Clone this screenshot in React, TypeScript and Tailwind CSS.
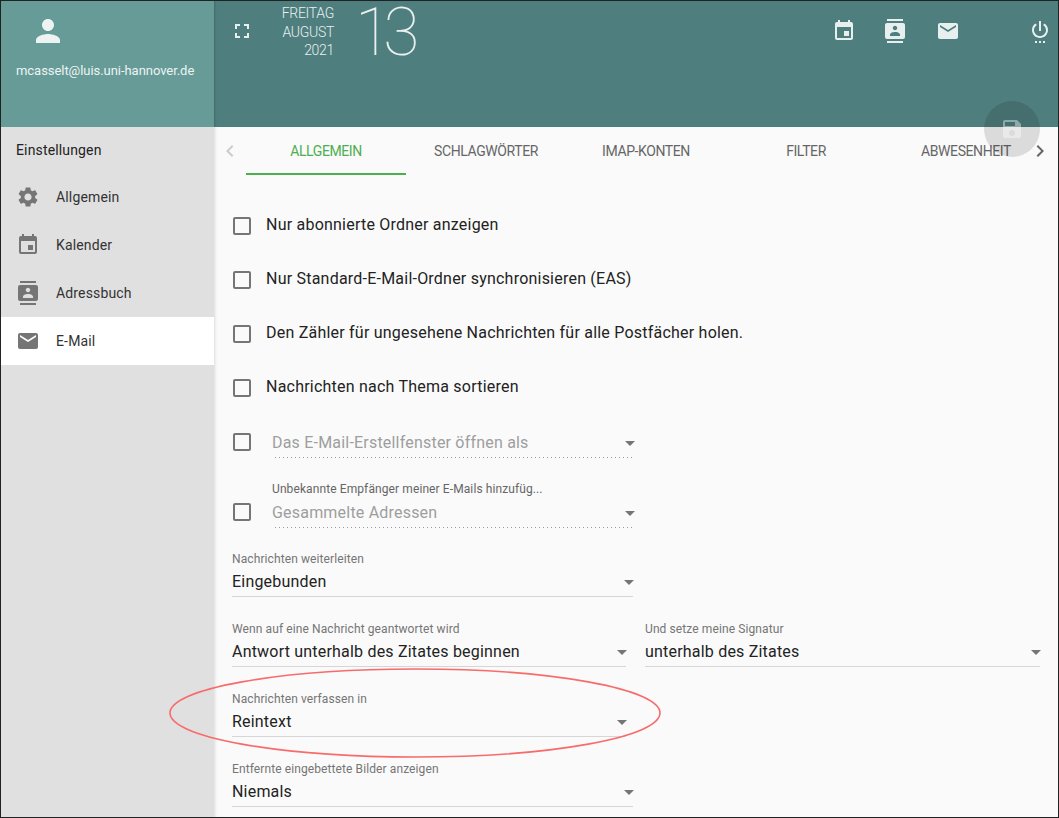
import React from 'react';
import {
  MdPerson,
  MdFullscreen,
  MdEvent,
  MdContacts,
  MdEmail,
  MdSettingsPower,
  MdSettings,
  MdSave,
  MdChevronLeft,
  MdChevronRight,
  MdCheckBoxOutlineBlank,
  MdArrowDropDown,
} from 'react-icons/md';

const navItems = [
  { label: 'Allgemein', icon: MdSettings },
  { label: 'Kalender', icon: MdEvent },
  { label: 'Adressbuch', icon: MdContacts },
  { label: 'E-Mail', icon: MdEmail, active: true },
];

const tabs = ['Allgemein', 'Schlagwörter', 'IMAP-Konten', 'Filter', 'Abwesenheit'];

const checks = [
  'Nur abonnierte Ordner anzeigen',
  'Nur Standard-E-Mail-Ordner synchronisieren (EAS)',
  'Den Zähler für ungesehene Nachrichten für alle Postfächer holen.',
  'Nachrichten nach Thema sortieren',
];

interface SelectProps {
  label?: string;
  value: string;
  disabled?: boolean;
  className?: string;
}

const Select: React.FC<SelectProps> = ({ label, value, disabled, className }) => (
  <div className={`relative h-[70px] ${className ?? ''}`}>
    {label && (
      <div className={`absolute top-[1px] left-0 text-[12px] leading-[14px] tracking-[0.1px] whitespace-nowrap ${disabled ? 'text-[#666]' : 'text-[#757575]'}`}>
        {label}
      </div>
    )}
    <div
      className={`absolute top-[16px] left-0 right-0 flex items-center justify-between ${
        disabled
          ? 'h-[31px] text-[#9e9e9e] bg-[linear-gradient(to_right,#999_0%,#999_33%,transparent_0%)] bg-[length:4px_1px] bg-bottom bg-repeat-x'
          : 'h-[30px] border-b border-[#d6d6d6] text-[#222]'
      }`}
    >
      <span className={`text-[16px] tracking-[0.2px] whitespace-nowrap ${disabled ? '' : 'mt-[1px]'}`}>{value}</span>
      <MdArrowDropDown size={24} className="text-[#757575] -mr-[8px] shrink-0" />
    </div>
  </div>
);

const App: React.FC = () => {
  return (
    <div className="relative h-[818px] w-[1059px] overflow-hidden border border-[#222] bg-[#fafafa] font-['Roboto',sans-serif]">
      {/* Header */}
      <header className="flex h-[126px]">
        <div className="flex w-[213px] flex-col bg-[#669b97] pt-[12px] pl-[15px] text-[#ecf3f2]">
          <MdPerson size={36} className="ml-[14px]" />
          <div className="mt-[12px] text-[13px] tracking-[-0.05px] whitespace-nowrap">mcasselt@luis.uni-hannover.de</div>
        </div>
        <div className="flex flex-1 bg-[#4f7e7e] text-[#e8f0ef] shadow-[inset_2px_0_2px_-1px_rgba(0,0,0,0.15)]">
          <MdFullscreen size={24} className="mt-[18px] ml-[16px]" />
          <div className="mt-[3px] ml-[12px] w-[68px] text-right text-[14px] leading-[18.5px] tracking-[-0.3px] font-light">
            <div>FREITAG</div>
            <div>AUGUST</div>
            <div>2021</div>
          </div>
          <div className="ml-[21px] text-[66px] leading-[64px] tracking-[-8px] font-thin">13</div>
          <div className="ml-auto flex items-start pt-[18px] pr-[5px]">
            <MdEvent size={24} className="mr-[27px]" />
            <MdContacts size={24} className="mr-[29px]" />
            <MdEmail size={24} className="mr-[68px]" />
            <MdSettingsPower size={24} className="mr-[1px]" />
          </div>
        </div>
      </header>

      <div className="flex h-[690px]">
        {/* Sidebar */}
        <nav className="w-[213px] shrink-0 bg-[#e0e0e0] text-[#333]">
          <div className="flex h-[46px] items-center pl-[15px] text-[14px] tracking-[0.15px] text-[#222]">Einstellungen</div>
          {navItems.map((item) => (
            <div key={item.label} className={`flex h-[48px] items-center pl-[15px] ${item.active ? 'bg-white' : ''}`}>
              <item.icon size={24} className="text-[#757575]" />
              <span className="ml-[16px] text-[14px] tracking-[0.15px]">{item.label}</span>
            </div>
          ))}
        </nav>

        {/* Main */}
        <main className="flex-1 shadow-[inset_3px_0_3px_-2px_rgba(0,0,0,0.12)]">
          <div className="flex h-[48px] items-center">
            <MdChevronLeft size={24} className="ml-[4px] mr-[4px] shrink-0 text-[#ccc]" />
            {tabs.map((tab, i) => (
              <div
                key={tab}
                className={`flex h-[48px] w-[160px] shrink-0 items-center justify-center border-b-2 pt-[2px] text-[14px] tracking-[-0.4px] uppercase ${
                  i === 0 ? 'border-[#4caf50] text-[#4caf50]' : 'border-transparent text-[#666]'
                }`}
              >
                {tab}
              </div>
            ))}
            <MdChevronRight size={24} className="-ml-[18px] shrink-0 text-[#666]" />
          </div>

          <div className="pt-[24px] pl-[18px]">
            {checks.map((text) => (
              <div key={text} className="flex h-[54px] items-center">
                <MdCheckBoxOutlineBlank size={24} className="-ml-[2px] text-[#757575]" />
                <span className="ml-[12px] pb-[2px] text-[16px] tracking-[0.22px] text-[#222]">{text}</span>
              </div>
            ))}

            <div className="-mt-[4px] flex">
              <MdCheckBoxOutlineBlank size={24} className="-ml-[2px] mt-[19px] shrink-0 text-[#757575]" />
              <Select disabled value="Das E-Mail-Erstellfenster öffnen als" className="ml-[18px] w-[362px]" />
            </div>
            <div className="flex">
              <MdCheckBoxOutlineBlank size={24} className="-ml-[2px] mt-[19px] shrink-0 text-[#757575]" />
              <Select disabled label="Unbekannte Empfänger meiner E-Mails hinzufüg..." value="Gesammelte Adressen" className="ml-[18px] w-[362px]" />
            </div>
            <Select label="Nachrichten weiterleiten" value="Eingebunden" className="w-[401px]" />
            <div className="flex gap-[19px]">
              <Select label="Wenn auf eine Nachricht geantwortet wird" value="Antwort unterhalb des Zitates beginnen" className="w-[394px]" />
              <Select label="Und setze meine Signatur" value="unterhalb des Zitates" className="w-[395px]" />
            </div>
            <Select label="Nachrichten verfassen in" value="Reintext" className="w-[394px]" />
            <Select label="Entfernte eingebettete Bilder anzeigen" value="Niemals" className="w-[401px]" />
          </div>
        </main>
      </div>

      {/* Save button floats over the header edge */}
      <div className="absolute top-[100px] left-[983px] flex h-[56px] w-[56px] items-center justify-center rounded-full bg-black/12">
        <MdSave size={24} className="text-white/40" />
      </div>

      {/* Red annotation around "Nachrichten verfassen in" */}
      <svg className="pointer-events-none absolute top-[667px] left-[168px]" width="494" height="92" viewBox="0 0 494 92" fill="none">
        <ellipse cx="246" cy="45" rx="245" ry="44" stroke="#f96a6a" strokeWidth="1.6" />
      </svg>
    </div>
  );
};

export default App;
